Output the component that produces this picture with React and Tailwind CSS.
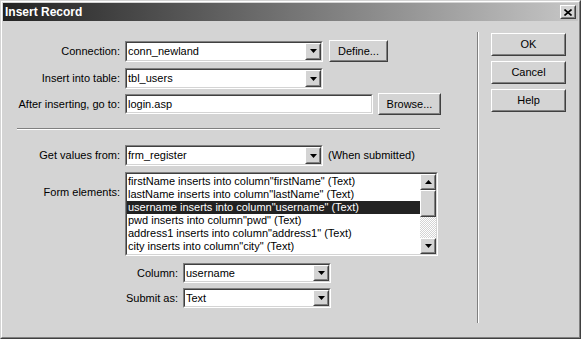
import React from "react";

function Raised({ className = "", children }) {
  return (
    <div
      className={`border border-t-white border-l-white border-r-[#404040] border-b-[#404040] bg-[#d4d4d4] ${className}`}
    >
      <div className="w-full h-full border border-t-[#d4d4d4] border-l-[#d4d4d4] border-r-[#808080] border-b-[#808080] flex items-center justify-center">
        {children}
      </div>
    </div>
  );
}

function Sunken({ className = "", children, inner = "bg-white" }) {
  return (
    <div
      className={`border border-t-[#808080] border-l-[#808080] border-r-white border-b-white ${className}`}
    >
      <div
        className={`w-full h-full border border-t-[#404040] border-l-[#404040] border-r-[#d4d4d4] border-b-[#d4d4d4] flex ${inner}`}
      >
        {children}
      </div>
    </div>
  );
}

function Down() {
  return (
    <svg width="7" height="4" viewBox="0 0 7 4">
      <polygon points="0,0 7,0 3.5,4" fill="#000" />
    </svg>
  );
}
function Up() {
  return (
    <svg width="7" height="4" viewBox="0 0 7 4">
      <polygon points="0,4 7,4 3.5,0" fill="#000" />
    </svg>
  );
}

function Select({ value, w = "w-[198px]", h = "h-[21px]" }) {
  return (
    <Sunken className={`${w} ${h}`}>
      <div className="flex-1 flex items-center pl-[1px] leading-none">{value}</div>
      <Raised className="w-[16px] h-full">
        <Down />
      </Raised>
    </Sunken>
  );
}

function Button({ children, className = "" }) {
  return (
    <Raised className={className}>
      <span className="leading-none">{children}</span>
    </Raised>
  );
}

const rows = [
  'firstName inserts into column"firstName" (Text)',
  'lastName inserts into column"lastName" (Text)',
  'username inserts into column"username" (Text)',
  'pwd inserts into column"pwd" (Text)',
  'address1 inserts into column"address1" (Text)',
  'city inserts into column"city" (Text)',
];

export default function App() {
  return (
    <div className="w-[581px] h-[339px] bg-[#d4d4d4] border border-t-[#d4d4d4] border-l-[#d4d4d4] border-r-[#404040] border-b-[#404040] font-['Liberation_Sans',Arial,sans-serif] text-[11px] text-black">
      <div className="w-full h-full border border-t-white border-l-white border-r-[#808080] border-b-[#808080] p-[1px] flex flex-col">
        {/* Title bar */}
        <div className="h-[18px] flex items-center justify-between bg-[linear-gradient(to_right,#222222,#c6c6c6)] pl-[2px] pr-[2px]">
          <span className="text-white font-bold text-[12px] leading-none">Insert Record</span>
          <Raised className="w-[16px] h-[14px]">
            <svg width="8" height="7" viewBox="0 0 8 7">
              <path d="M0.5 0.5 L7.5 6.5 M7.5 0.5 L0.5 6.5" stroke="#000" strokeWidth="1.6" />
            </svg>
          </Raised>
        </div>

        {/* Body */}
        <div className="flex flex-1">
          {/* Left form */}
          <div className="w-[474px] flex flex-col">
            {/* Connection */}
            <div className="mt-[19px] h-[22px] flex items-center gap-[5px]">
              <div className="w-[117px] text-right">Connection:</div>
              <Select value="conn_newland" />
              <Button className="ml-[1px] w-[59px] h-[22px]">Define...</Button>
            </div>
            {/* Insert into table */}
            <div className="mt-[6px] h-[21px] flex items-center gap-[5px]">
              <div className="w-[117px] text-right">Insert into table:</div>
              <Select value="tbl_users" />
            </div>
            {/* After inserting */}
            <div className="mt-[4px] h-[22px] flex items-center gap-[5px]">
              <div className="w-[117px] text-right">After inserting, go to:</div>
              <Sunken className="w-[248px] h-[20px]">
                <div className="flex-1 flex items-center pl-[1px] leading-none">login.asp</div>
              </Sunken>
              <Button className="w-[63px] h-[22px]">Browse...</Button>
            </div>
            {/* Separator */}
            <div className="mt-[13px] ml-[14px] w-[423px] h-[2px] border-t border-t-[#808080] border-b border-b-white" />
            {/* Get values */}
            <div className="mt-[15px] h-[21px] flex items-center gap-[5px]">
              <div className="w-[117px] text-right">Get values from:</div>
              <Select value="frm_register" />
              <span>(When submitted)</span>
            </div>
            {/* Form elements */}
            <div className="mt-[6px] flex items-start gap-[5px]">
              <div className="w-[117px] text-right mt-[14px] leading-[13px]">Form elements:</div>
              <Sunken className="w-[313px] h-[84px]">
                <div className="flex-1 pt-[1px]">
                  {rows.map((r, i) => (
                    <div
                      key={i}
                      className={`h-[13px] leading-[13px] pl-[1px] whitespace-nowrap ${
                        i === 2 ? "bg-[#222222] text-white" : ""
                      }`}
                    >
                      {r}
                    </div>
                  ))}
                </div>
                <div className="w-[16px] flex flex-col">
                  <Raised className="w-[16px] h-[16px]">
                    <Up />
                  </Raised>
                  <Raised className="w-[16px] h-[27px]" />
                  <div className="flex-1 bg-[repeating-conic-gradient(#ffffff_0_25%,#d4d4d4_0_50%)] bg-[length:2px_2px]" />
                  <Raised className="w-[16px] h-[16px]">
                    <Down />
                  </Raised>
                </div>
              </Sunken>
            </div>
            {/* Column */}
            <div className="mt-[7px] h-[20px] flex items-center gap-[5px]">
              <div className="w-[175px] text-right">Column:</div>
              <Select value="username" w="w-[148px]" h="h-[20px]" />
            </div>
            {/* Submit as */}
            <div className="mt-[5px] h-[20px] flex items-center gap-[5px]">
              <div className="w-[175px] text-right">Submit as:</div>
              <Select value="Text" w="w-[148px]" h="h-[20px]" />
            </div>
          </div>

          {/* Vertical separator */}
          <div className="mt-[11px] w-[2px] h-[291px] border-l border-l-[#808080] border-r border-r-white" />

          {/* Buttons */}
          <div className="ml-[12px] mt-[12px] flex flex-col gap-[5px]">
            <Button className="w-[75px] h-[23px]">OK</Button>
            <Button className="w-[75px] h-[23px]">Cancel</Button>
            <Button className="w-[75px] h-[23px]">Help</Button>
          </div>
        </div>
      </div>
    </div>
  );
}
